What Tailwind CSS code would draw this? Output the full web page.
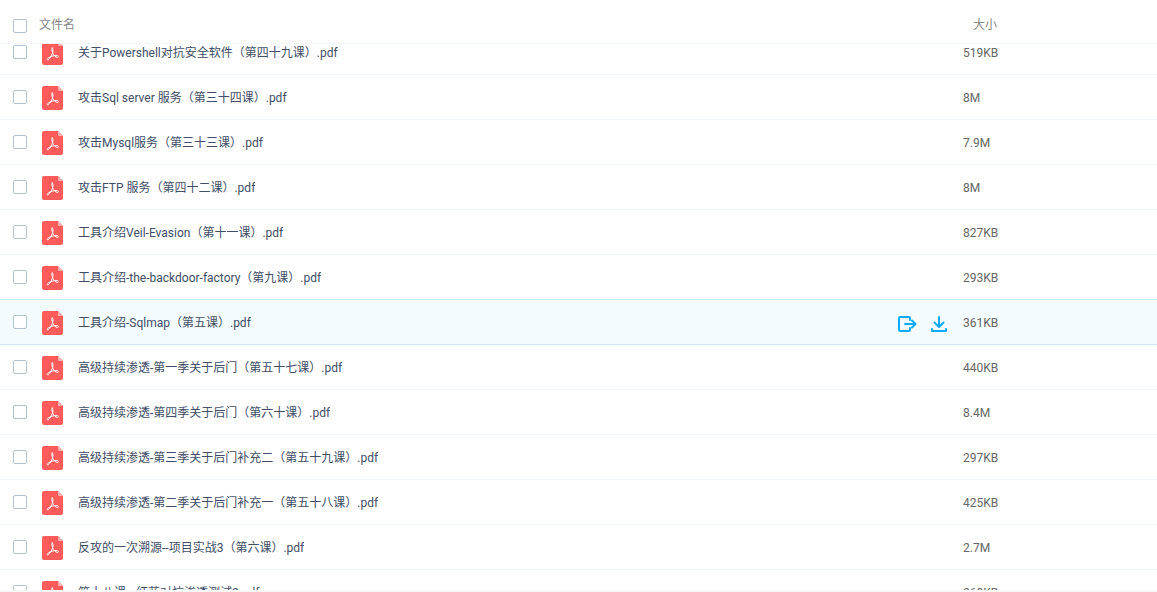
<!DOCTYPE html>
<html lang="zh-CN">
  <head>
    <meta charset="UTF-8" />
    <title>文件列表</title>
    <meta name="viewport" content="width=device-width, initial-scale=1.0" />
    <script src="https://cdn.jsdelivr.net/npm/@tailwindcss/browser@4"></script>
  </head>
  <body class="h-screen flex flex-col overflow-hidden bg-white font-[Roboto,'Noto_Sans_CJK_SC',sans-serif] text-xs text-[#424e67]">

    <!-- Column headings -->
    <header class="shrink-0 h-11 pt-1.5 flex items-center border-b border-[#f2f6fd] text-[#888888]">
      <label class="flex-1 flex items-center pl-[13px] gap-3">
        <input type="checkbox" class="appearance-none size-3.5 mt-0.5 rounded-xs border border-[#b4c1d0] bg-white checked:bg-[#09aaff]" />
        <span>文件名</span>
      </label>
      <span class="w-[194px] pl-2.5">大小</span>
    </header>

    <!-- File list -->
    <main class="flex-1 min-h-0 overflow-hidden">
      <table class="w-full table-fixed border-separate border-spacing-0 -mt-3.5">
        <colgroup>
          <col class="w-[42px]" />
          <col />
          <col class="w-[78px]" />
          <col class="w-[194px]" />
        </colgroup>
        <tbody id="fileList"></tbody>
      </table>
    </main>

    <footer class="shrink-0 h-0.5 bg-[#f7f7f7]"></footer>

    <!-- Row icons -->
    <svg class="hidden">
      <symbol id="pdf" viewBox="0 0 21 24">
        <path fill="#ff5b5b" d="M2 0h14l5 5v17a2 2 0 0 1-2 2H2a2 2 0 0 1-2-2V2a2 2 0 0 1 2-2z" />
        <path fill="#ffb0b0" d="M16 0l5 5h-4a1 1 0 0 1-1-1z" />
        <path fill="none" stroke="#ffffff" stroke-width="1" stroke-linecap="round" stroke-linejoin="round" d="M10.200 7c-1 .6-.2 3 .6 5.200.8 2.200 2.800 4.100 4.700 4.200 1.400 0 1.200-1.700-.4-1.800-3-.2-5.900.7-8.300 2-1.700 1-2 2.300-1 2.300 1.500-.2 3.800-4.100 4.800-7.300.5-1.800.9-4.400-.4-4.600z" />
      </symbol>
      <symbol id="share" viewBox="0 0 20 18">
        <path fill="none" stroke="#09aaff" stroke-width="2" stroke-linecap="round" stroke-linejoin="round" d="M13 5V3a1 1 0 0 0-1-1H3a1 1 0 0 0-1 1v12a1 1 0 0 0 1 1h9a1 1 0 0 0 1-1v-2M8 9h10M15 5.500L18.500 9 15 12.500" />
      </symbol>
      <symbol id="download" viewBox="0 0 18 18">
        <path fill="none" stroke="#09aaff" stroke-width="2" stroke-linecap="round" stroke-linejoin="round" d="M9 2v9M4.500 7.500L9 12l4.500-4.500M2 14v2h14v-2" />
      </symbol>
    </svg>

    <script>
      const files = [
        { name: '关于Powershell对抗安全软件（第四十九课）.pdf', size: '519KB' },
        { name: '攻击Sql server 服务（第三十四课）.pdf', size: '8M' },
        { name: '攻击Mysql服务（第三十三课）.pdf', size: '7.9M' },
        { name: '攻击FTP 服务（第四十二课）.pdf', size: '8M' },
        { name: '工具介绍Veil-Evasion（第十一课）.pdf', size: '827KB' },
        { name: '工具介绍-the-backdoor-factory（第九课）.pdf', size: '293KB' },
        { name: '工具介绍-Sqlmap（第五课）.pdf', size: '361KB', active: true },
        { name: '高级持续渗透-第一季关于后门（第五十七课）.pdf', size: '440KB' },
        { name: '高级持续渗透-第四季关于后门（第六十课）.pdf', size: '8.4M' },
        { name: '高级持续渗透-第三季关于后门补充二（第五十九课）.pdf', size: '297KB' },
        { name: '高级持续渗透-第二季关于后门补充一（第五十八课）.pdf', size: '425KB' },
        { name: '反攻的一次溯源--项目实战3（第六课）.pdf', size: '2.7M' },
        { name: '第十八课---红蓝对抗渗透测试2.pdf', size: '268KB' },
      ];

      const actions = `
        <div class="flex items-center gap-[13px] pt-1">
          <button type="button" aria-label="分享"><svg class="block w-5 h-[18px]"><use href="#share" /></svg></button>
          <button type="button" aria-label="下载"><svg class="block size-[18px]"><use href="#download" /></svg></button>
        </div>`;

      document.getElementById('fileList').innerHTML = files.map((file, i) => {
        const next = files[i + 1];
        const line = file.active || (next && next.active) ? 'border-[#c9e9fb]' : 'border-[#f2f6fd]';
        const bg = file.active ? 'bg-[#f3fbff]' : 'bg-white';
        return `
          <tr class="h-[45px] ${bg}">
            <td class="p-0 pl-[13px] border-b ${line}">
              <input id="file${i}" type="checkbox" class="block appearance-none size-3.5 rounded-xs border border-[#b4c1d0] bg-white checked:bg-[#09aaff]" />
            </td>
            <td class="p-0 border-b ${line}">
              <label for="file${i}" class="flex items-center gap-[15px]">
                <svg class="w-[21px] h-6 shrink-0 mt-0.5"><use href="#pdf" /></svg>
                <span class="truncate pt-0.5">${file.name}</span>
              </label>
            </td>
            <td class="p-0 pl-3 border-b ${line}">${file.active ? actions : ''}</td>
            <td class="p-0 pt-0.5 border-b ${line} text-[#666666]">${file.size}</td>
          </tr>`;
      }).join('');
    </script>
  </body>
</html>
